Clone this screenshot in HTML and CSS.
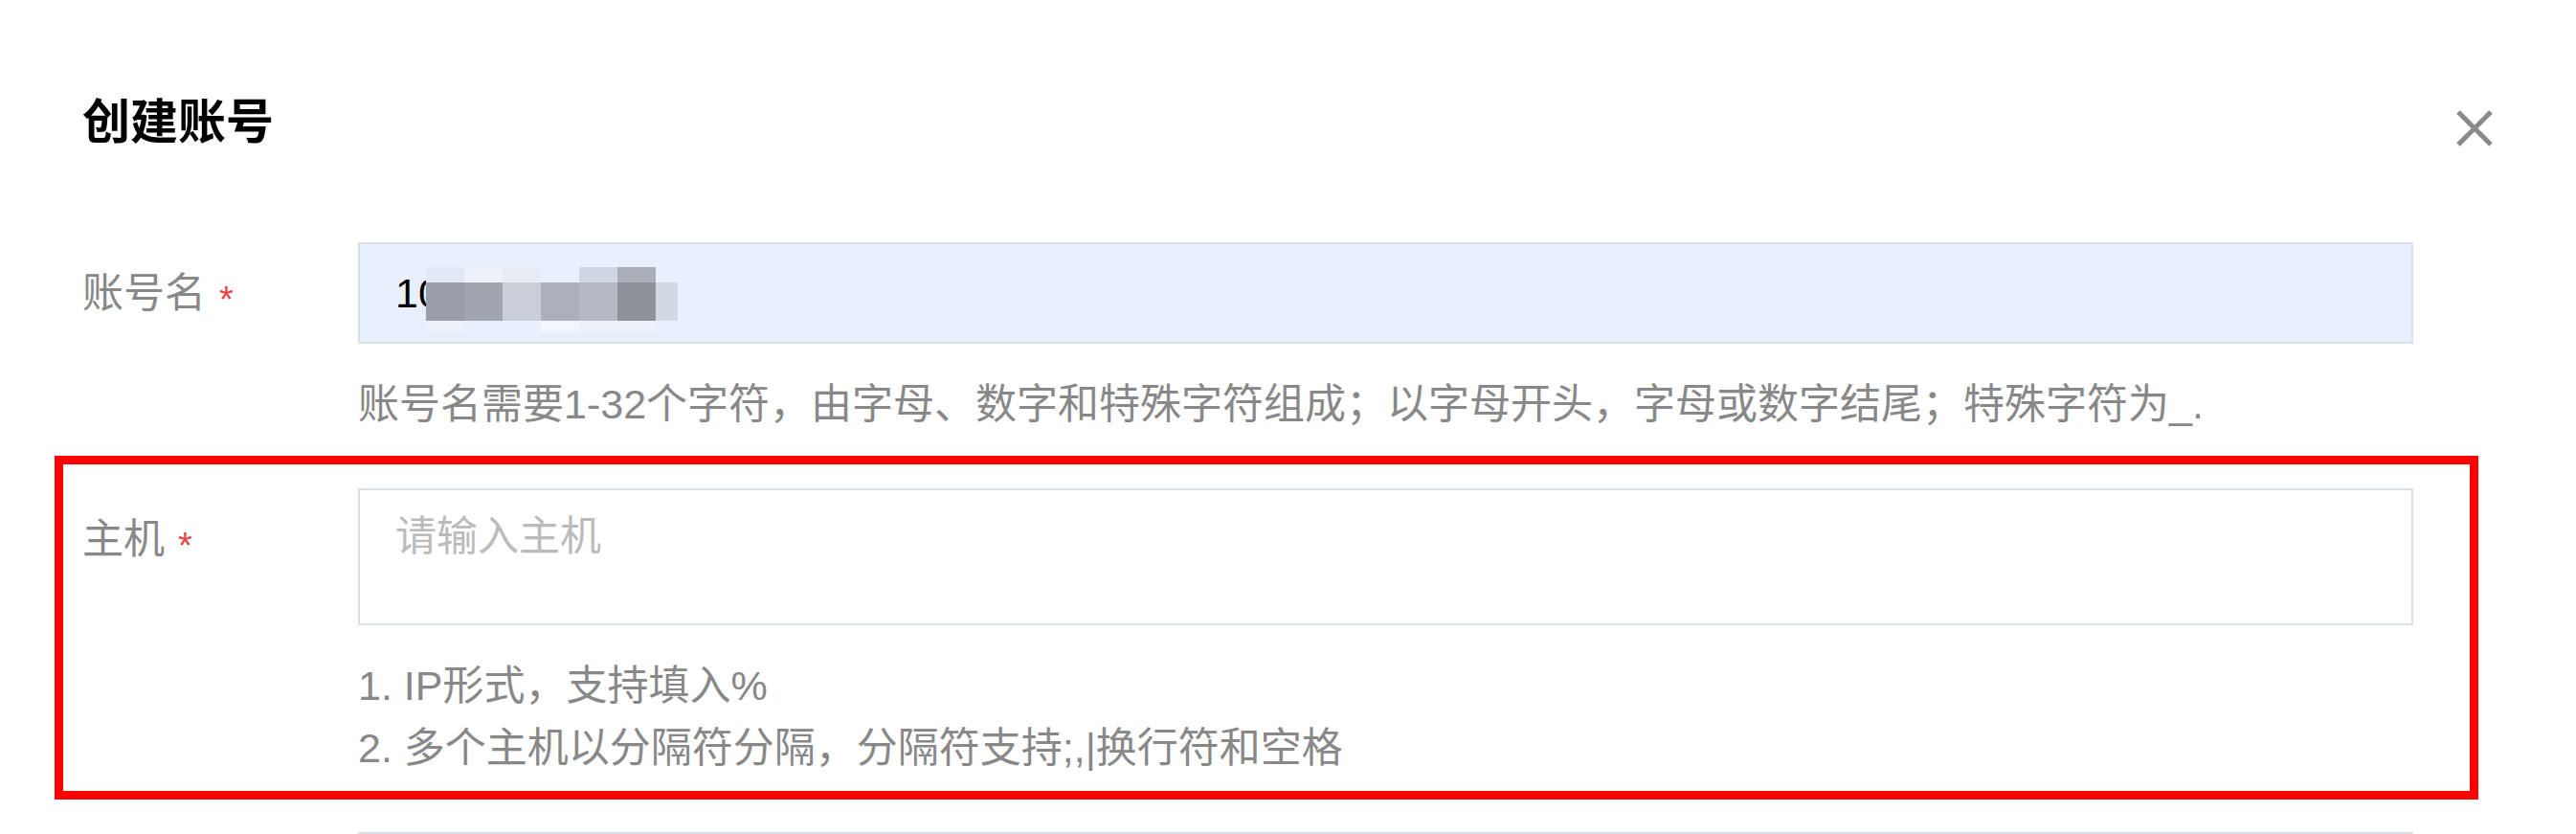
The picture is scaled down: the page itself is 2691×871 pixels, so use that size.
FILE: index.html
```html
<!DOCTYPE html>
<html lang="zh-CN">

<head>
    <meta charset="UTF-8">
    <meta name="viewport" content="width=device-width, initial-scale=1.0">
    <title>创建账号</title>
    <link rel="stylesheet" href="styles.css">
</head>

<body>

    <div class="dialog">
        <div class="dialog-header">
            <h3 class="dialog-title">创建账号</h3>
            <button class="dialog-close" type="button" aria-label="关闭">
                <svg width="40" height="40" viewBox="0 0 40 40">
                    <path d="M3 3L37 37M37 3L3 37" stroke="#8a8a8a" stroke-width="5" fill="none" />
                </svg>
            </button>
        </div>

        <form class="form">
            <div class="form-item">
                <label class="form-label" for="account">账号名<span class="required">*</span></label>
                <div class="form-control">
                    <div class="input-wrap">
                        <input id="account" class="input input-autofill" type="text" value="10">
                        <!-- masked value -->
                        <div class="mosaic">
                            <span class="m1"></span><span class="m2"></span><span class="m3"></span><span></span><span class="m4"></span><span class="m5"></span><span></span>
                            <span class="m6"></span><span class="m7"></span><span class="m8"></span><span class="m9"></span><span class="m10"></span><span class="m11"></span><span class="m12"></span>
                            <span class="m2"></span><span></span><span></span><span class="m13"></span><span class="m2"></span><span class="m2"></span><span></span>
                        </div>
                    </div>
                    <div class="form-help">
                        <p>账号名需要1-32个字符，由字母、数字和特殊字符组成；以字母开头，字母或数字结尾；特殊字符为_.</p>
                    </div>
                </div>
            </div>

            <div class="form-item form-item-marked">
                <label class="form-label" for="host">主机<span class="required">*</span></label>
                <div class="form-control">
                    <textarea id="host" class="textarea" placeholder="请输入主机"></textarea>
                    <div class="form-help">
                        <p>1. IP形式，支持填入%</p>
                        <p>2. 多个主机以分隔符分隔，分隔符支持;,|换行符和空格</p>
                    </div>
                </div>
            </div>

            <!-- next field, cut off by the window -->
            <div class="form-item">
                <div class="form-label"></div>
                <div class="form-control">
                    <input class="input" type="password" aria-label="密码">
                </div>
            </div>
        </form>
    </div>

</body>

</html>
```

FILE: styles.css
```css
* {
    box-sizing: border-box;
}

body {
    margin: 0;
    background: #fff;
    font-family: "Liberation Sans", "Noto Sans CJK SC", sans-serif;
    overflow: hidden;
}

.dialog-header {
    display: flex;
    justify-content: space-between;
    align-items: center;
    padding: 93px 86px 0;
}

.dialog-title {
    margin: 0;
    font-size: 50px;
    line-height: 70px;
    font-weight: 700;
    color: #000;
}

.dialog-close {
    width: 40px;
    height: 40px;
    margin-top: 11px;
    padding: 0;
    border: 0;
    background: none;
    cursor: pointer;
}

.dialog-close svg {
    display: block;
}

.form {
    width: 2532px;
    margin: 56px 0 0 57px;
}

.form-item {
    display: flex;
    border: 9px solid transparent;
    padding: 25px 59px 12px 20px;
}

.form-item-marked {
    border-color: #ff0000;
}

.form-label {
    flex: none;
    width: 288px;
    font-size: 43px;
    line-height: 106px;
    color: #888;
}

.required {
    margin-left: 14px;
    font-size: 38px;
    vertical-align: -5px;
    color: #e54545;
}

.form-control {
    width: 2147px;
}

.input-wrap {
    position: relative;
}

.input,
.textarea {
    display: block;
    width: 100%;
    border: 2px solid #dadfe8;
    border-radius: 0;
    padding: 0 37px;
    font-family: "Liberation Sans", "Noto Sans CJK SC", sans-serif;
    font-size: 43px;
    color: #000;
    background: #fff;
    outline: none;
}

.input {
    height: 106px;
}

.input-autofill {
    background: #e8f0fe;
}

.textarea {
    height: 143px;
    padding: 16px 37px;
    line-height: 65px;
    resize: none;
}

.textarea::placeholder {
    color: #bbb;
}

.mosaic {
    position: absolute;
    left: 71px;
    top: 26px;
    display: grid;
    grid-template-columns: repeat(6, 40px) 23px;
    grid-template-rows: 16px 40px 12px;
}

.m1 { background: #e2e9f4; }
.m2 { background: #edf1f9; }
.m3 { background: #e7ecf5; }
.m4 { background: #d0d7e2; }
.m5 { background: #a9aeb8; }
.m6 { background: #999ea8; }
.m7 { background: #a0a5af; }
.m8 { background: #c9ced8; }
.m9 { background: #abb0ba; }
.m10 { background: #b4b9c4; }
.m11 { background: #8e929b; }
.m12 { background: #d3d9e3; }
.m13 { background: #f3f6fc; }

.form-help {
    margin-top: 31px;
    font-size: 43px;
    line-height: 65px;
    color: #888;
}

.form-help p {
    margin: 0;
}
```
